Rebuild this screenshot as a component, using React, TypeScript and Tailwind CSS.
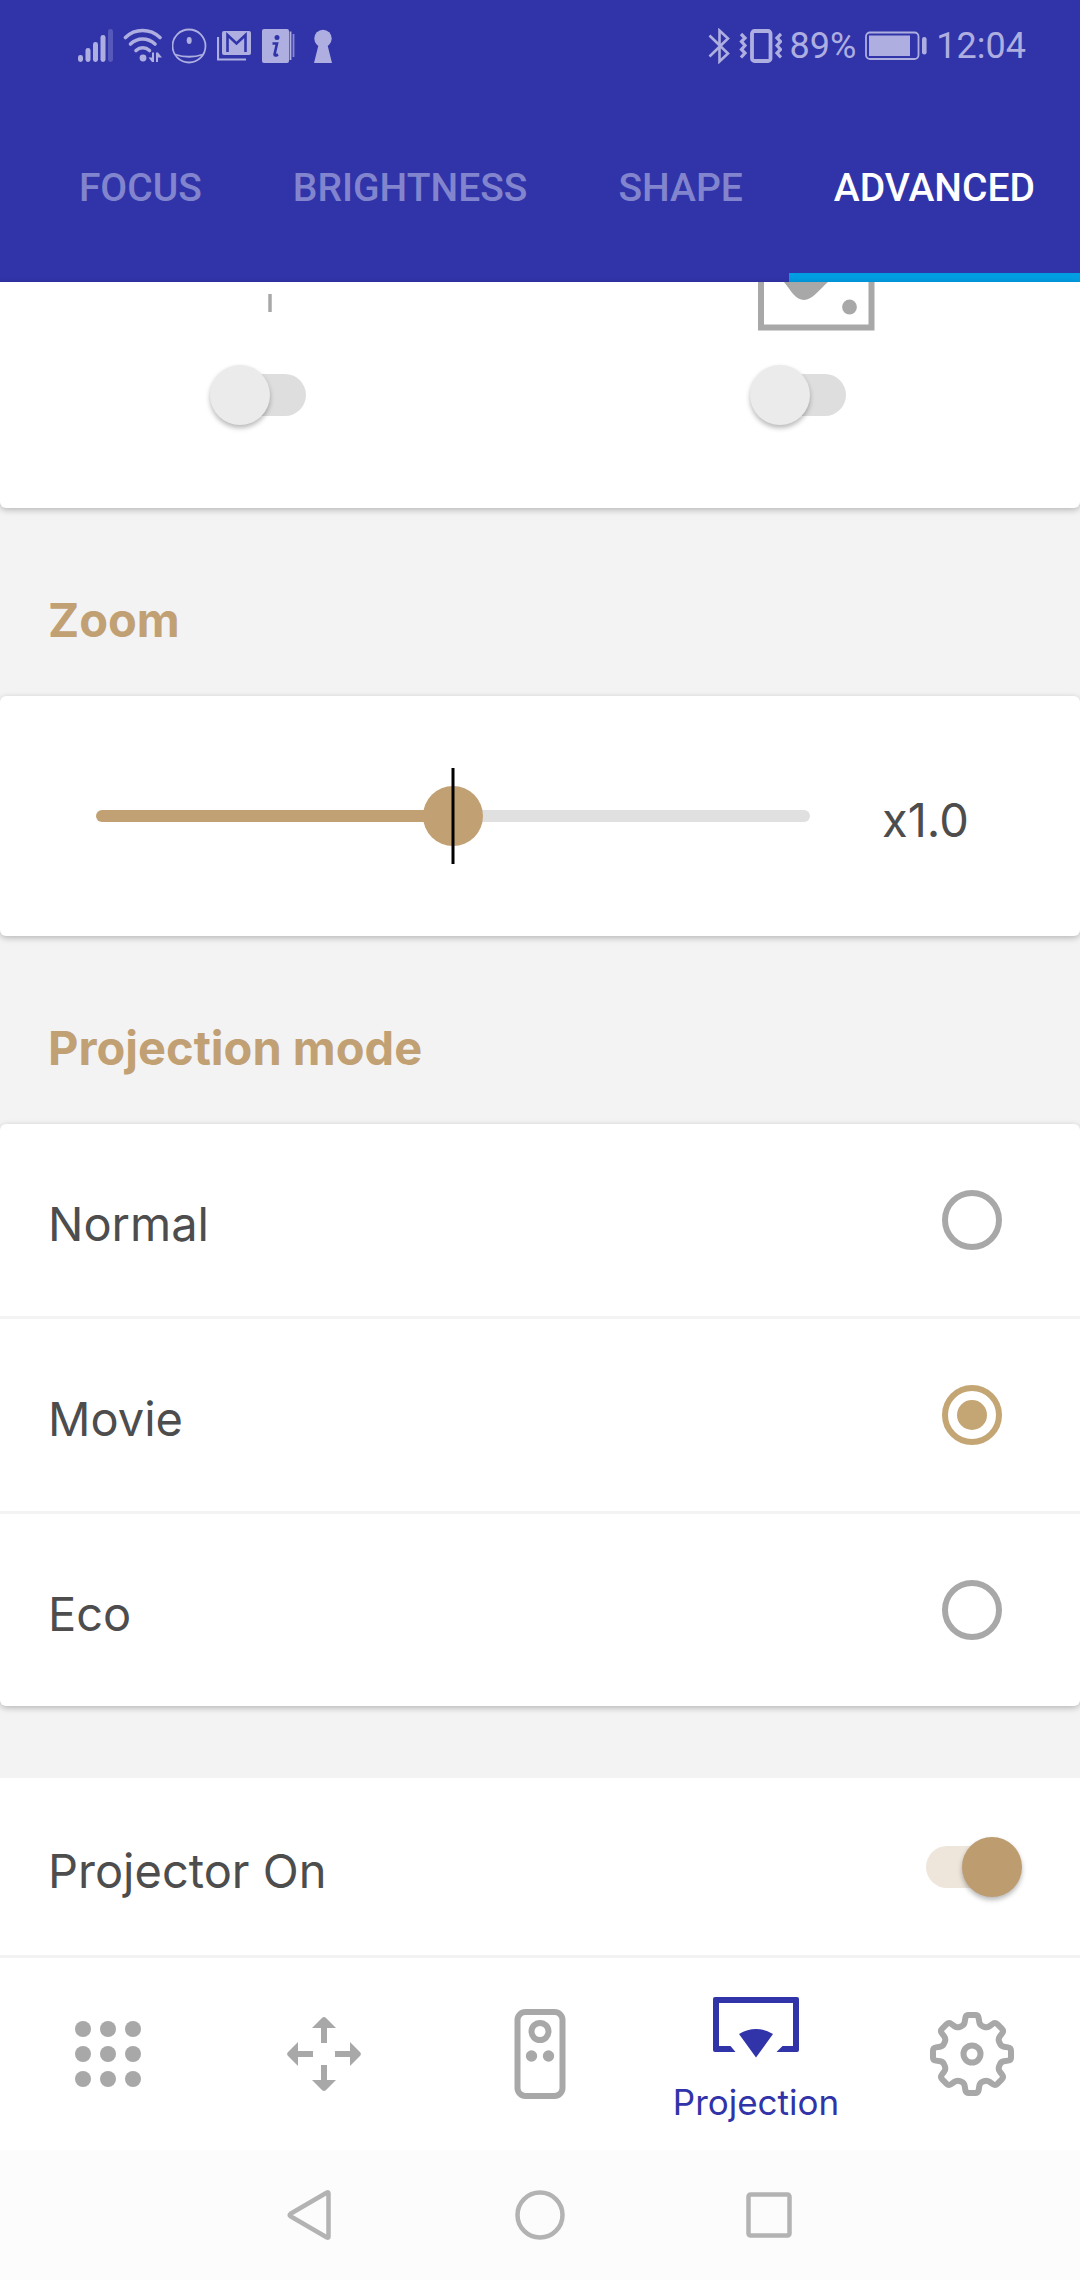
import { useState } from "react";
import type { ReactNode } from "react";

const tabs = ["FOCUS", "BRIGHTNESS", "SHAPE", "ADVANCED"];
const modes = ["Normal", "Movie", "Eco"];

/* ---------- status bar icons ---------- */

function SignalIcon() {
  return (
    <svg width="36" height="36" viewBox="0 0 36 36" fill="currentColor" aria-hidden="true">
      <rect x="0" y="27" width="5" height="7" rx="2.4" />
      <rect x="7.5" y="20" width="5" height="14" rx="2.4" />
      <rect x="15" y="14" width="5" height="20" rx="2.4" />
      <rect x="22.5" y="7" width="5" height="27" rx="2.4" />
      <rect x="30" y="1" width="5" height="33" rx="2.4" opacity="0.3" />
    </svg>
  );
}

function WifiIcon() {
  return (
    <svg width="40" height="36" viewBox="0 0 40 36" aria-hidden="true">
      <g fill="none" stroke="currentColor" strokeWidth="3.6" strokeLinecap="round">
        <path d="M2.5 9.5C12 .2 27 .2 37 9.5" />
        <path d="M7.5 16C14.500 9.300 24.500 9.300 32 16" />
        <path d="M13 22.500C17 18.800 22.500 18.800 26.500 22.500" />
      </g>
      <g fill="currentColor">
        <circle cx="20" cy="30" r="3.400" />
        <path d="M31 24.500V34H29L25.500 29.500H29V24.500Z" />
        <path d="M33 34V24.500H35L39 29.500H35V34Z" />
      </g>
    </svg>
  );
}

function BallIcon() {
  return (
    <svg width="36" height="36" viewBox="0 0 36 36" aria-hidden="true">
      <circle cx="17" cy="18" r="16.500" fill="none" stroke="currentColor" strokeWidth="1.800" />
      <ellipse cx="17.200" cy="12.500" rx="2.500" ry="3.400" fill="currentColor" />
      <path d="M3 26.500Q17 31 31 26.500" fill="none" stroke="currentColor" strokeWidth="1.800" />
    </svg>
  );
}

function MailIcon() {
  return (
    <svg width="36" height="36" viewBox="0 0 36 36" aria-hidden="true">
      <path fill="currentColor" d="M7 3H32a2 2 0 0 1 2 2V25a2 2 0 0 1-2 2H7a2 2 0 0 1-2-2V5a2 2 0 0 1 2-2Z" />
      <path d="M10.500 24V7L19.500 15.500L28.500 7V24" fill="none" stroke="#3034a8" strokeWidth="2.600" />
      <path d="M1 9V31.500H29" fill="none" stroke="currentColor" strokeWidth="2.200" />
    </svg>
  );
}

function InfoIcon() {
  return (
    <svg width="34" height="36" viewBox="0 0 34 36" aria-hidden="true">
      <rect x="0" y="1" width="27" height="34" rx="2" fill="currentColor" />
      <path d="M28.500 3.500V32" stroke="currentColor" strokeWidth="1.800" />
      <path d="M31.500 6V29" stroke="currentColor" strokeWidth="1.800" opacity="0.700" />
      <circle cx="15" cy="9.500" r="2.500" fill="#3034a8" />
      <path d="M10.500 15.500H15L12.500 26.500Q12.500 28.500 16 26.500" fill="none" stroke="#3034a8" strokeWidth="2.600" />
    </svg>
  );
}

function KeyholeIcon() {
  return (
    <svg width="20" height="36" viewBox="0 0 20 36" fill="currentColor" aria-hidden="true">
      <circle cx="10" cy="10.500" r="8.700" />
      <path d="M6 15H14L19 35H1Z" />
    </svg>
  );
}

function BluetoothIcon() {
  return (
    <svg width="22" height="36" viewBox="0 0 22 36" fill="none" stroke="currentColor" strokeWidth="2.600" aria-hidden="true">
      <path d="M1.500 7.500L20 25.500L11.500 33.500V2.500L20 10.500L1.500 28.500" />
    </svg>
  );
}

function VibrateIcon() {
  return (
    <svg width="44" height="36" viewBox="0 0 44 36" fill="none" stroke="currentColor" aria-hidden="true">
      <rect x="14" y="3" width="18.500" height="30" rx="2.500" strokeWidth="3.800" />
      <path d="M3 6L7 10L3.500 13.500L7 17.500L3.500 21.500L7 25L3 29.500" strokeWidth="3.200" />
      <path d="M43 6L39 10L42.500 13.500L39 17.500L42.500 21.500L39 25L43 29.500" strokeWidth="3.200" />
    </svg>
  );
}

function BatteryIcon() {
  return (
    <svg width="64" height="36" viewBox="0 0 64 36" aria-hidden="true">
      <rect x="2" y="4.500" width="52.500" height="26.500" rx="4" fill="none" stroke="currentColor" strokeWidth="1.800" />
      <rect x="5" y="7.500" width="41" height="20.500" fill="currentColor" />
      <rect x="58" y="9" width="4.600" height="17.500" rx="2.200" fill="currentColor" />
    </svg>
  );
}

/* ---------- panel icons ---------- */

function TickIcon() {
  return (
    <svg width="8" height="50" viewBox="0 0 8 50" aria-hidden="true">
      <path d="M4 12V30" stroke="#a8a8a8" strokeWidth="3.500" />
    </svg>
  );
}

function PictureIcon() {
  return (
    <svg width="118" height="50" viewBox="0 0 118 50" aria-hidden="true">
      <path d="M4 -4V45.500H114.500V-4" fill="none" stroke="#a8a8a8" strokeWidth="6" />
      <path d="M27 0C34 9 39 18 47 18S62 8 71 0Z" fill="#a8a8a8" />
      <circle cx="92.500" cy="25" r="7.400" fill="#a8a8a8" />
    </svg>
  );
}

/* ---------- bottom navigation icons ---------- */

function GridIcon() {
  return (
    <svg width="84" height="84" viewBox="-42 -42 84 84" fill="currentColor" aria-hidden="true">
      {[-25, 0, 25].map((y) =>
        [-25, 0, 25].map((x) => <circle key={`${x},${y}`} cx={x} cy={y} r="8" />)
      )}
    </svg>
  );
}

function MoveIcon() {
  return (
    <svg width="84" height="84" viewBox="-42 -42 84 84" fill="currentColor" aria-hidden="true">
      {[0, 90, 180, 270].map((angle) => (
        <path
          key={angle}
          transform={`rotate(${angle})`}
          d="M-3 -11V-26H-12L-1.800 -36.200Q0 -37.800 1.800 -36.200L12 -26H3V-11Z"
        />
      ))}
    </svg>
  );
}

function RemoteIcon() {
  return (
    <svg width="54" height="92" viewBox="-27 -46 54 92" fill="none" stroke="currentColor" strokeWidth="6" aria-hidden="true">
      <rect x="-22.500" y="-42" width="45" height="84" rx="8" />
      <circle cx="0" cy="-22.500" r="8.500" />
      <circle cx="-8.500" cy="2" r="5.700" fill="currentColor" stroke="none" />
      <circle cx="8.500" cy="2" r="5.700" fill="currentColor" stroke="none" />
    </svg>
  );
}

function ProjectionIcon() {
  return (
    <svg width="88" height="64" viewBox="0 0 88 64" fill="currentColor" aria-hidden="true">
      <path d="M3 1H85a2 2 0 0 1 2 2V54a2 2 0 0 1-2 2H64.500L70.500 50H81V7H7V50H18.500L23.500 56H3a2 2 0 0 1-2-2V3a2 2 0 0 1 2-2Z" />
      <path d="M44 61.500L27 38Q44 28 61 38Z" />
    </svg>
  );
}

// Closed outline of an eight-toothed gear with softened corners.
function gearOutline() {
  const corners: [number, number][] = [];
  for (let tooth = 0; tooth < 8; tooth++) {
    const shape: [number, number][] = [
      [30, -15],
      [39.500, -9],
      [39.500, 9],
      [30, 15],
    ];
    for (const [radius, offset] of shape) {
      const a = ((tooth * 45 + offset) * Math.PI) / 180;
      corners.push([radius * Math.sin(a), -radius * Math.cos(a)]);
    }
  }
  const toward = (from: number[], to: number[], distance: number) => {
    const length = Math.hypot(to[0] - from[0], to[1] - from[1]);
    const k = distance / length;
    return `${(from[0] + (to[0] - from[0]) * k).toFixed(2)} ${(from[1] + (to[1] - from[1]) * k).toFixed(2)}`;
  };
  const count = corners.length;
  return (
    corners
      .map((corner, i) => {
        const before = corners[(i + count - 1) % count];
        const after = corners[(i + 1) % count];
        const start = toward(corner, before, 3);
        const end = toward(corner, after, 3);
        return `${i === 0 ? "M" : "L"}${start}Q${corner[0].toFixed(2)} ${corner[1].toFixed(2)} ${end}`;
      })
      .join("") + "Z"
  );
}

function GearIcon() {
  return (
    <svg width="88" height="88" viewBox="-44 -44 88 88" fill="none" stroke="currentColor" strokeWidth="6" strokeLinejoin="round" aria-hidden="true">
      <path d={gearOutline()} />
      <circle cx="0" cy="0" r="8.500" />
    </svg>
  );
}

/* ---------- controls ---------- */

function Switch({ id, label, initial }: { id: string; label?: string; initial: boolean }) {
  const [on, setOn] = useState(initial);
  return (
    <span className="relative flex h-[60px] w-24 items-center">
      <input
        id={id}
        type="checkbox"
        role="switch"
        aria-label={label}
        checked={on}
        onChange={(e) => setOn(e.target.checked)}
        className="peer absolute inset-0 z-10 h-full w-full cursor-pointer opacity-0"
      />
      <span className="ml-3 h-[42px] w-[84px] rounded-full bg-[#dedede] peer-checked:ml-0 peer-checked:bg-[#eee6db]" />
      <span className="absolute top-0 left-0 size-[60px] rounded-full bg-[#ebebeb] shadow-[0_3px_5px_rgba(0,0,0,0.28)] peer-checked:left-9 peer-checked:bg-[#bd9c70]" />
    </span>
  );
}

function Heading({ id, children }: { id: string; children: ReactNode }) {
  return (
    <h2 id={id} className="px-12 pt-[81px] pb-[45px] text-[47px] leading-[62px] font-bold text-[#c1a073]">
      {children}
    </h2>
  );
}

const card = "bg-white shadow-[0_2px_6px_rgba(0,0,0,0.25)]";

const navItems = [
  { label: "Apps", icon: <GridIcon /> },
  { label: "Move", icon: <MoveIcon /> },
  { label: "Remote", icon: <RemoteIcon /> },
  { label: "Projection", icon: <ProjectionIcon />, active: true },
  { label: "Settings", icon: <GearIcon /> },
];

export default function App() {
  const [zoom, setZoom] = useState(50);
  const [mode, setMode] = useState("Movie");

  return (
    <div className="flex min-h-screen flex-col bg-[#f3f3f3] font-['Inter',sans-serif] text-[#4d4d4d]">
      <header className="bg-[#3034a8] font-['Roboto',sans-serif]">
        <div className="flex h-[92px] items-center justify-between pr-[54px] pl-[78px] text-[#aeaee0]">
          <div className="flex items-center gap-[9px]">
            <SignalIcon />
            <WifiIcon />
            <BallIcon />
            <MailIcon />
            <InfoIcon />
            <span className="pl-2">
              <KeyholeIcon />
            </span>
          </div>
          <div className="flex items-center gap-2 text-[36px] leading-[44px]">
            <BluetoothIcon />
            <VibrateIcon />
            <span>89%</span>
            <BatteryIcon />
            <span>12:04</span>
          </div>
        </div>
        <nav className="flex justify-end gap-px overflow-hidden" aria-label="Projection settings">
          {tabs.map((tab) => (
            <button
              key={tab}
              type="button"
              aria-current={tab === "ADVANCED" ? "page" : undefined}
              className="shrink-0 border-b-[9px] border-transparent px-[45px] pt-[73px] pb-[62px] text-[39px] leading-[46px] font-medium text-[#8285cd] aria-[current=page]:border-[#009de2] aria-[current=page]:text-white"
            >
              {tab}
            </button>
          ))}
        </nav>
      </header>

      <main className="flex-1">
        <section className={`grid grid-cols-2 rounded-b-md pb-[83px] ${card}`} aria-label="Image orientation">
          <div className="flex flex-col items-center gap-[33px]">
            <TickIcon />
            <span className="pr-6">
              <Switch id="flip" label="Flip" initial={false} />
            </span>
          </div>
          <div className="flex flex-col items-center gap-[33px]">
            <span className="pl-3">
              <PictureIcon />
            </span>
            <span className="pr-6">
              <Switch id="picture" label="Picture" initial={false} />
            </span>
          </div>
        </section>

        <Heading id="zoom-title">Zoom</Heading>
        <section className={`flex items-center rounded-md py-[72px] pl-24 ${card}`}>
          <div className="relative flex h-24 flex-1 items-center">
            <input
              type="range"
              min={0}
              max={100}
              value={zoom}
              onChange={(e) => setZoom(Number(e.target.value))}
              aria-labelledby="zoom-title"
              style={{ backgroundImage: `linear-gradient(to right, #c1a073 ${zoom}%, #e0e0e0 ${zoom}%)` }}
              className="h-3 w-full cursor-pointer appearance-none rounded-full [&::-webkit-slider-thumb]:size-[60px] [&::-webkit-slider-thumb]:appearance-none [&::-webkit-slider-thumb]:rounded-full [&::-webkit-slider-thumb]:bg-[#c1a073]"
            />
            <span className="pointer-events-none absolute inset-y-0 left-1/2 w-[3px] -translate-x-1/2 bg-black" />
          </div>
          <output className="w-[270px] pt-2 pl-[72px] text-[47px] leading-[60px]">x{(zoom / 50).toFixed(1)}</output>
        </section>

        <Heading id="mode-title">Projection mode</Heading>
        <section
          role="radiogroup"
          aria-labelledby="mode-title"
          className={`divide-y-[3px] divide-[#f3f3f3] overflow-hidden rounded-md ${card}`}
        >
          {modes.map((name) => (
            <label key={name} className="flex cursor-pointer items-center justify-between py-[66px] pr-[78px] pl-12">
              <span className="pt-2 text-[47px] leading-[52px]">{name}</span>
              <input
                type="radio"
                name="mode"
                value={name}
                checked={mode === name}
                onChange={() => setMode(name)}
                className="size-[60px] cursor-pointer appearance-none rounded-full border-[6px] border-[#a8a8a8] p-[9px] bg-clip-content checked:border-[#c4a574] checked:bg-[#c4a574]"
              />
            </label>
          ))}
        </section>

        <section className="mt-[72px] flex items-center justify-between border-b-[3px] border-[#f3f3f3] bg-white pt-[59px] pr-[58px] pb-[58px] pl-12">
          <label htmlFor="power" className="pt-2 text-[47px] leading-[52px]">
            Projector On
          </label>
          <Switch id="power" initial={true} />
        </section>
      </main>

      <nav className="grid grid-cols-5 bg-white" aria-label="Main">
        {navItems.map(({ label, icon, active }) => (
          <button
            key={label}
            type="button"
            aria-label={label}
            aria-current={active ? "page" : undefined}
            className="flex h-48 flex-col items-center justify-center gap-5 text-[#a8a8a8] aria-[current=page]:pt-3 aria-[current=page]:text-[#3034a8]"
          >
            {icon}
            {active && <span className="text-[35px] leading-[44px]">{label}</span>}
          </button>
        ))}
      </nav>

      <div className="flex h-[130px] justify-center bg-[#fcfcfc] text-[#b3b3b3]">
        <button type="button" aria-label="Back" className="flex w-[230px] items-center justify-center">
          <svg width="46" height="54" viewBox="0 0 46 54" fill="none" stroke="currentColor" strokeWidth="4.500" strokeLinejoin="round" aria-hidden="true">
            <path d="M40 4.500Q41.500 3.500 41.500 5.500V48.500Q41.500 50.500 40 49.500L3.500 28.200Q1.800 27 3.500 25.800Z" />
          </svg>
        </button>
        <button type="button" aria-label="Home" className="flex w-[230px] items-center justify-center">
          <svg width="50" height="50" viewBox="0 0 50 50" fill="none" stroke="currentColor" strokeWidth="4.500" aria-hidden="true">
            <circle cx="25" cy="25" r="22.500" />
          </svg>
        </button>
        <button type="button" aria-label="Recent apps" className="flex w-[230px] items-center justify-center">
          <svg width="48" height="46" viewBox="0 0 48 46" fill="none" stroke="currentColor" strokeWidth="4.500" aria-hidden="true">
            <rect x="2.500" y="2.500" width="41" height="41" rx="2" />
          </svg>
        </button>
      </div>
    </div>
  );
}
